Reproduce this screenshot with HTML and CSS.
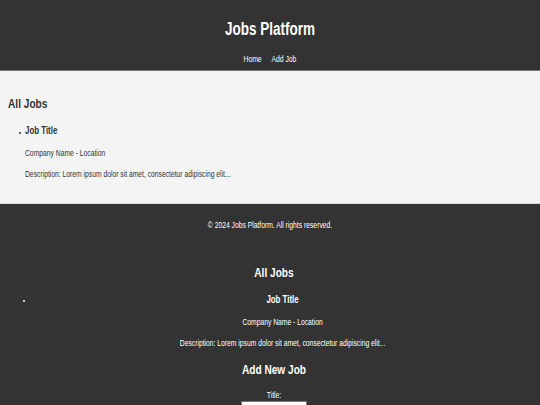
FILE: index.html
```html
<!DOCTYPE html>
<html lang="en">
<head>
<meta charset="utf-8">
<title>Jobs Platform</title>
<link rel="stylesheet" href="styles.css">
</head>
<body>
<header class="site-header">
  <h1 class="site-title">Jobs Platform</h1>
  <nav class="site-nav">
    <a class="nav-link" href="#">Home</a>
    <a class="nav-link" href="#">Add Job</a>
  </nav>
</header>
<main class="main">
  <h2 class="section-title">All Jobs</h2>
  <ul class="job-list">
    <li class="job">
      <h3 class="job-title">Job Title</h3>
      <p class="job-text">Company Name - Location</p>
      <p class="job-text">Description: Lorem ipsum dolor sit amet, consectetur adipiscing elit...</p>
    </li>
  </ul>
</main>
<footer class="site-footer">
  <p class="footer-text">&copy; 2024 Jobs Platform. All rights reserved.</p>
</footer>
<section class="listing">
  <h2 class="section-title">All Jobs</h2>
  <ul class="job-list">
    <li class="job">
      <h3 class="job-title">Job Title</h3>
      <p class="job-text">Company Name - Location</p>
      <p class="job-text">Description: Lorem ipsum dolor sit amet, consectetur adipiscing elit...</p>
    </li>
  </ul>
</section>
<section class="add-job">
  <h2 class="section-title">Add New Job</h2>
  <form class="job-form">
    <label class="form-label" for="title">Title:</label>
    <input class="form-input" id="title" type="text">
  </form>
</section>
</body>
</html>
```
FILE: styles.css
```css
html, body {
  margin: 0;
  padding: 0;
}
body {
  background: #333333;
  color: #ffffff;
  font-family: "Liberation Sans", Arial, sans-serif;
  font-size: 9px;
  line-height: 13.5px;
  text-align: center;
}

/* the page is drawn with a condensed letterform */
.site-title,
.site-nav,
.section-title,
.job-title,
.job-text,
.footer-text,
.form-label {
  transform: scaleX(0.75);
}
.main .section-title,
.main .job-title,
.main .job-text {
  transform-origin: left center;
}

.site-header {
  background: #333333;
  padding: 7px 0 3.2px;
  border-bottom: 1px solid #777777;
}
.site-title {
  font-size: 18px;
  line-height: 27px;
  margin: 9px 0 10.3px;
}
.site-nav {
  display: flex;
  justify-content: center;
  gap: 13.3px;
}
.nav-link {
  color: #ffffff;
  text-decoration: none;
}
.main {
  background: #f4f4f4;
  color: #333333;
  text-align: left;
  padding: 22.9px 8.4px 21.7px;
  border-bottom: 1px solid #d8d8d8;
}
.section-title {
  font-size: 13.5px;
  line-height: 20.25px;
  margin: 0 0 9px;
}
.job-list {
  margin: 0;
  padding-left: 16.9px;
  list-style: none;
}
.job {
  position: relative;
}
.job::before {
  content: "";
  position: absolute;
  left: -6px;
  top: 9px;
  width: 2px;
  height: 2px;
  border-radius: 50%;
  background: currentColor;
}
.listing .job::before {
  left: -2.3px;
  top: 7.6px;
}
.job-title {
  font-size: 10.53px;
  line-height: 15.8px;
  margin: 0 0 7.8px;
}
.job-text {
  margin: 0 0 7.5px;
}
.job-text:last-child {
  margin-bottom: 0;
}
.site-footer {
  padding: 8px 0;
}
.footer-text {
  margin: 6.8px 0 6.7px;
}
.listing {
  padding: 16.4px 0 0 8px;
}
.listing .section-title {
  margin-bottom: 8.4px;
}
.add-job {
  padding: 10.2px 0 0 8px;
}
.add-job .section-title {
  margin-bottom: 10.2px;
}
.form-label {
  display: block;
  line-height: 9px;
}
.form-input {
  box-sizing: border-box;
  width: 66px;
  height: 12px;
  padding: 1px;
  border: 1px solid #767676;
  background: #ffffff;
  font-size: 8px;
  margin: 1px 0 0;
}
```
